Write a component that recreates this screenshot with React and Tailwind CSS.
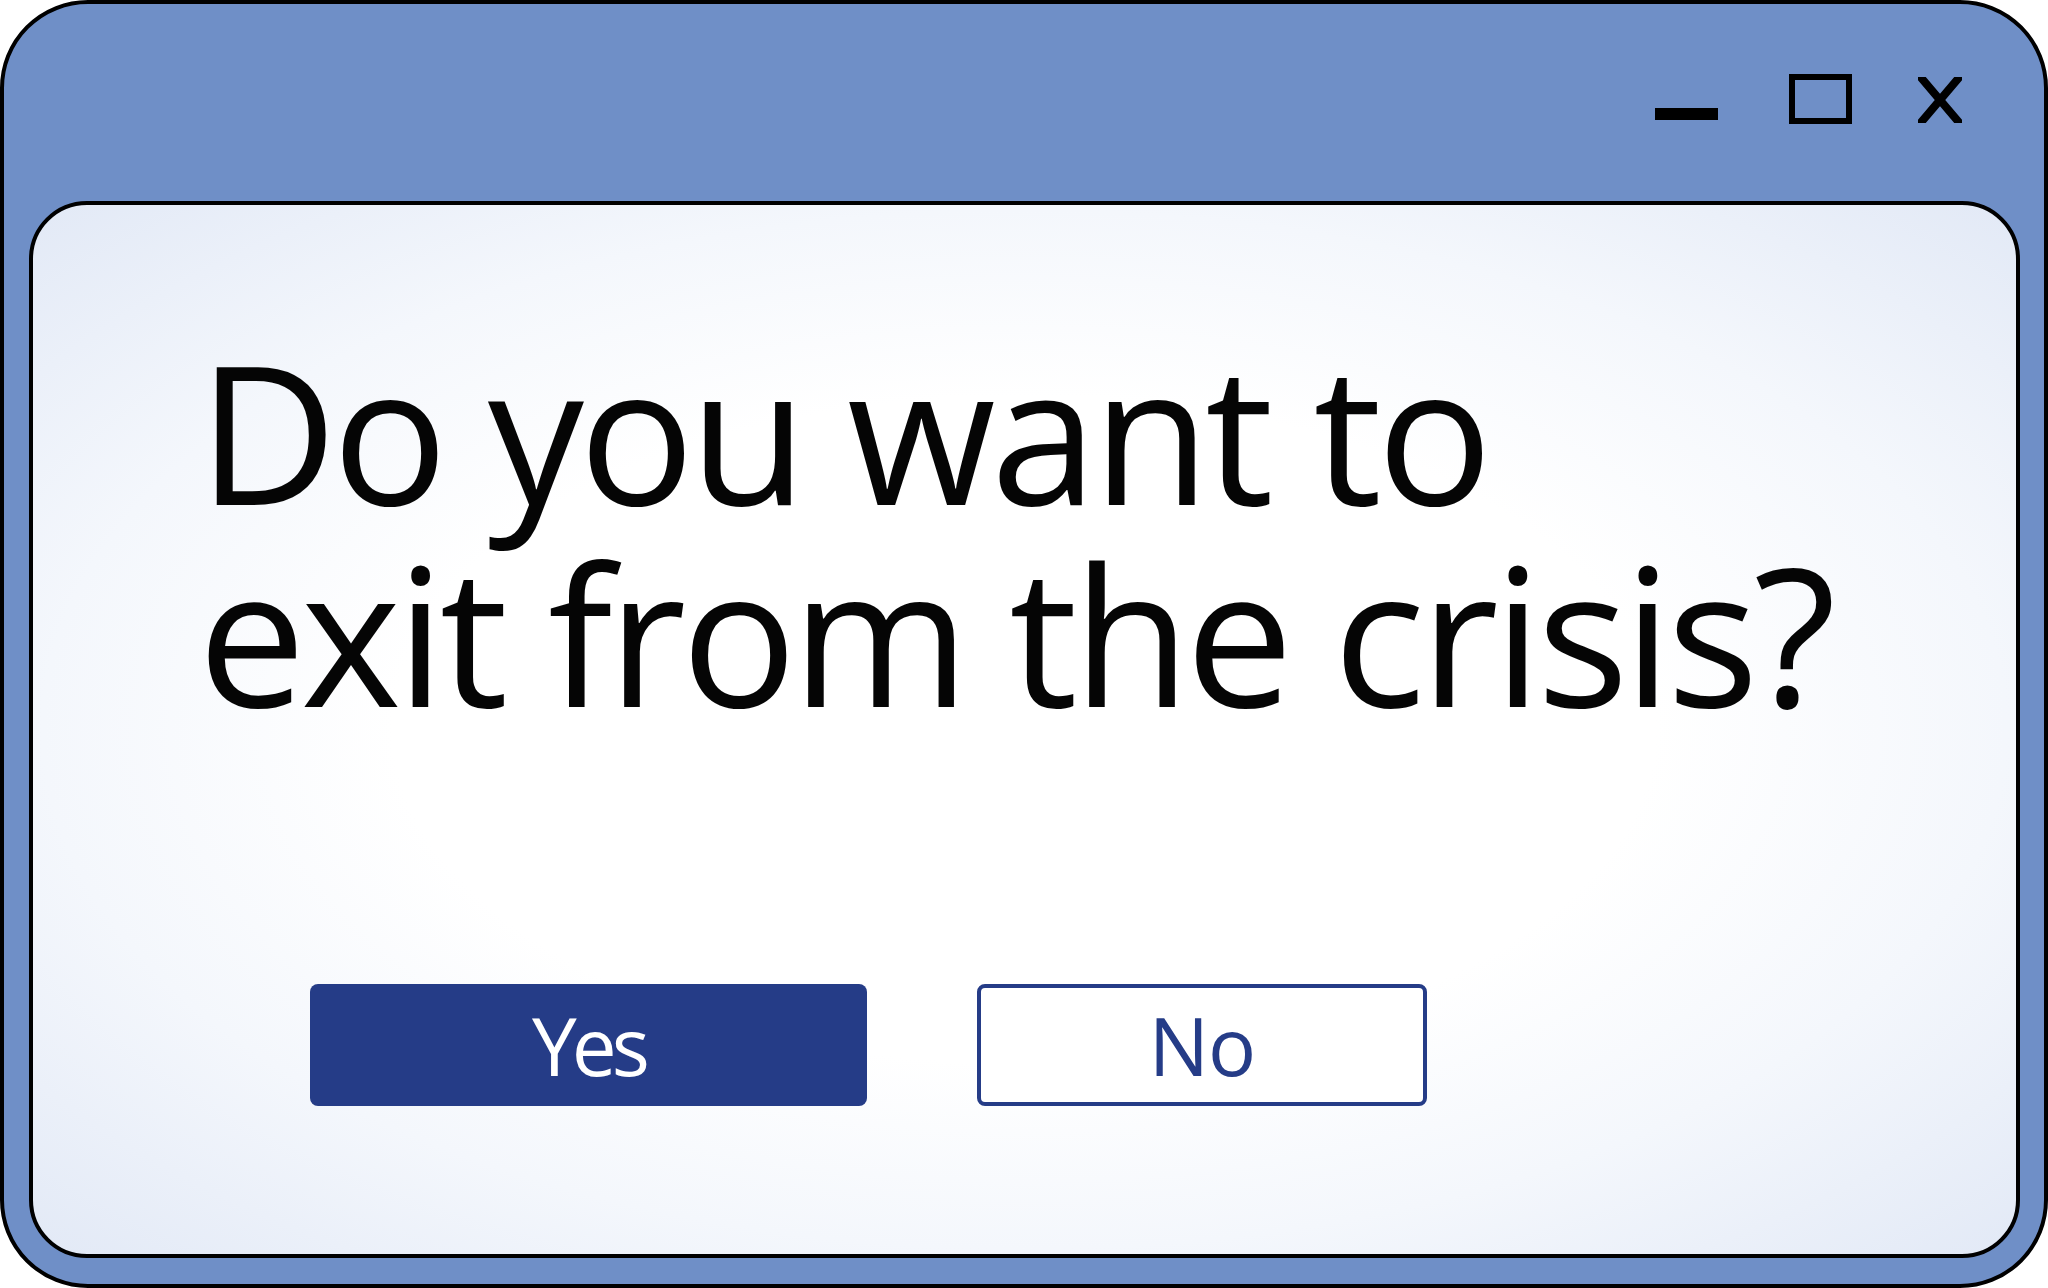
const WindowControls = () => (
  <div className="flex items-start justify-end pt-[70px] pr-[82px]">
    <div className="mt-[34px] h-[12px] w-[63px] bg-black" />
    <div className="ml-[71px] h-[50px] w-[63px] border-[6px] border-black" />
    <svg className="ml-[66px] mt-[3px]" width="44" height="46" viewBox="0 0 44 46">
      <path d="M0 -3 L44 49 M44 -3 L0 49" stroke="#000" strokeWidth="8" fill="none" />
    </svg>
  </div>
);

const App = () => {
  return (
    <div className="w-[2048px] h-[1288px] bg-white" style={{ fontFamily: '"Open Sans", "Noto Sans", sans-serif' }}>
      <div className="flex h-full w-full flex-col rounded-[88px] border-4 border-black bg-[#6f8fc7]">
        {/* title bar */}
        <div className="h-[197px] shrink-0">
          <WindowControls />
        </div>

        {/* dialog body */}
        <div className="mb-[26px] ml-[25px] mr-[24px] flex-1 rounded-[58px] border-4 border-black bg-[radial-gradient(ellipse_at_center,#ffffff_45%,#f4f7fc_70%,#e2e9f6_100%)]">
          <h1 className="pl-[165px] pt-[125px] text-[192px] leading-[202px] font-normal tracking-[-5px] text-[#050505]">
            Do you want to
            <br />
            exit from the crisis?
          </h1>

          <div className="mt-[250px] flex gap-[110px] pl-[277px]">
            <button className="flex h-[122px] w-[557px] items-center justify-center rounded-[8px] bg-[#253c87] text-[80px] tracking-[-5px] text-white">
              Yes
            </button>
            <button className="flex h-[122px] w-[450px] items-center justify-center rounded-[8px] border-4 border-[#253c87] bg-white text-[80px] tracking-[-1px] text-[#253c87]">
              No
            </button>
          </div>
        </div>
      </div>
    </div>
  );
};

export default App;
